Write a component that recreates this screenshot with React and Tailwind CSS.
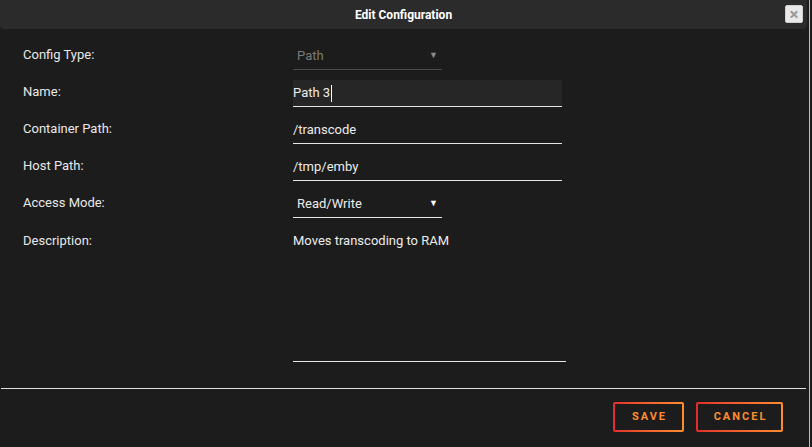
import React from "react";

const rows = [
  { label: "Config Type:", kind: "select", value: "Path", muted: true },
  { label: "Name:", kind: "input", value: "Path 3", focused: true },
  { label: "Container Path:", kind: "input", value: "/transcode" },
  { label: "Host Path:", kind: "input", value: "/tmp/emby" },
  { label: "Access Mode:", kind: "select", value: "Read/Write" },
];

function Field({ row }) {
  if (row.kind === "select") {
    return (
      <div
        className={`w-[149px] h-[27px] flex items-center justify-between pl-[4px] pr-[4px] border-b ${
          row.muted ? "border-[#4a4a4a] text-[#7a7a7a]" : "border-[#e6e6e6] text-[#ececec]"
        }`}
      >
        <span>{row.value}</span>
        <span className={`text-[9px] ${row.muted ? "text-[#8a8a8a]" : "text-white"}`}>▼</span>
      </div>
    );
  }
  return (
    <div
      className={`w-[269px] h-[27px] flex items-center border-b border-[#e6e6e6] text-[#ececec] ${
        row.focused ? "bg-[#262626]" : ""
      }`}
    >
      <span>{row.value}</span>
      {row.focused && <span className="ml-[1px] w-px h-[17px] bg-white" />}
    </div>
  );
}

export default function App() {
  return (
    <div
      className="w-[812px] h-[447px] flex bg-[#1c1c1c] overflow-hidden"
      style={{ fontFamily: "Roboto, 'Liberation Sans', sans-serif" }}
    >
      <div className="w-[809px] flex flex-col">
        {/* header */}
        <div className="h-[29px] mr-[2px] bg-[#2b2b2b] rounded-b-[4px] flex items-center justify-center relative">
          <span className="text-[12px] font-bold text-white">Edit Configuration</span>
          <button className="absolute right-[4px] top-[5px] w-[18px] h-[18px] bg-[#e9e9e9] rounded-[2px] border border-[#cfcfcf] flex items-center justify-center text-[#9a9a9a] text-[17px] font-bold leading-none">
            ×
          </button>
        </div>

        {/* body */}
        <div className="pl-[23px] pt-[14px] text-[13px]">
          {rows.map((row) => (
            <div key={row.label} className="flex items-center h-[27px] mb-[10px]">
              <div className="w-[270px] text-[#e8e8e8] -mt-[3px]">{row.label}</div>
              <Field row={row} />
            </div>
          ))}
          <div className="flex -mt-[1px]">
            <div className="w-[270px] text-[#e8e8e8] pt-[4px]">Description:</div>
            <div className="w-[273px] h-[135px] border-b border-[#e6e6e6] text-[#ececec] pt-[4px]">
              Moves transcoding to RAM
            </div>
          </div>
        </div>

        {/* footer */}
        <div className="mt-[26px] ml-[1px] mr-[3px] h-px bg-[#e0e0e0]" />
        <div className="flex justify-end gap-[12px] pt-[13px] pr-[26px]">
          {[
            ["SAVE", "w-[71px]"],
            ["CANCEL", "w-[87px]"],
          ].map(([t, w]) => (
            <div
              key={t}
              className={`${w} p-[2px] rounded-[2px] bg-gradient-to-r from-[#e22b2b] to-[#ff8d2f]`}
            >
              <div className="h-[26px] pl-[2px] bg-[#1c1c1c] flex items-center justify-center text-[11px] font-bold tracking-[2px] text-[#ff8d2f]">
                {t}
              </div>
            </div>
          ))}
        </div>
      </div>
      <div className="w-px bg-[#bdbdbd]" />
    </div>
  );
}
